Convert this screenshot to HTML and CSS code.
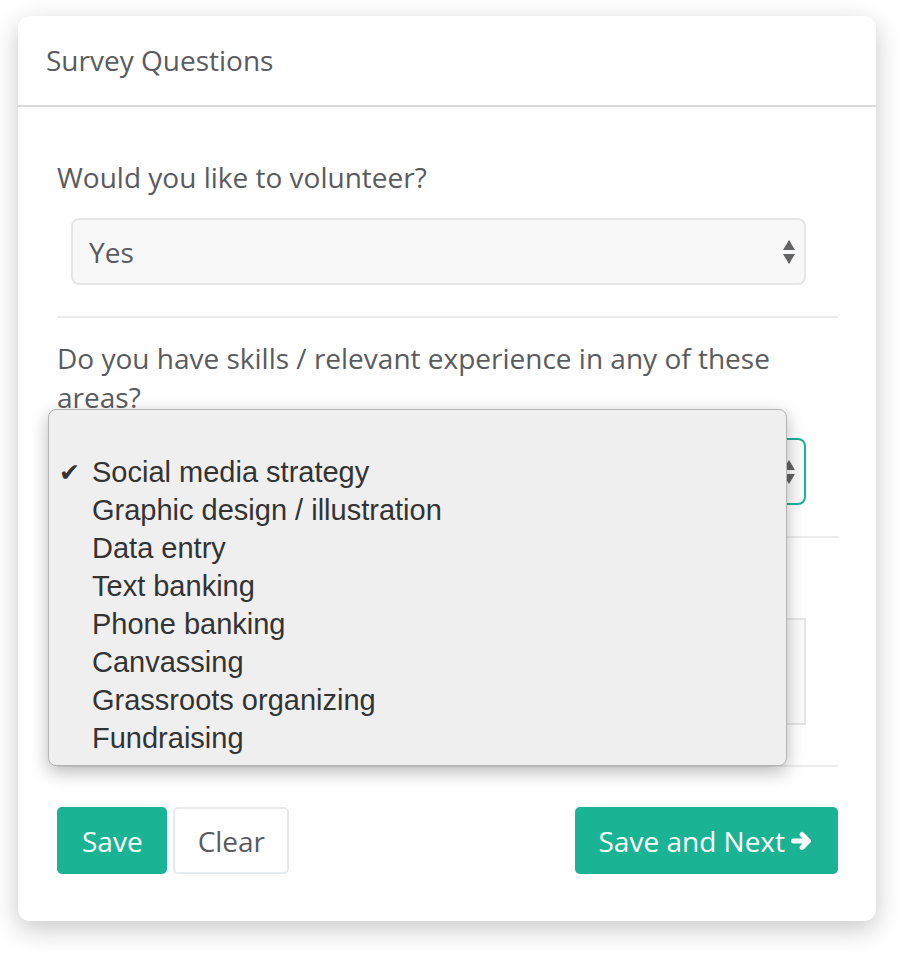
FILE: index.html
```html
<!DOCTYPE html>
<html lang="en">
<head>
    <meta charset="UTF-8">
    <meta name="viewport" content="width=device-width, initial-scale=1.0">
    <title>Survey Questions</title>
    <link rel="stylesheet" href="styles.css">
</head>
<body>
    <div class="card">
        <div class="card-header">Survey Questions</div>
        <div class="card-body">
            <div class="question">
                <label class="q-label">Would you like to volunteer?</label>
                <div class="select-box">
                    <span>Yes</span>
                    <svg class="updown" width="12" height="26" viewBox="0 0 12 26"><polygon points="6,0 12,10 0,10" fill="#626365"/><polygon points="0,14 12,14 6,24" fill="#626365"/></svg>
                </div>
            </div>
            <div class="question">
                <label class="q-label">Do you have skills / relevant experience in any of these areas?</label>
                <div class="select-box focused">
                    <span>Social media strategy</span>
                    <svg class="updown" width="12" height="26" viewBox="0 0 12 26"><polygon points="6,0 12,10 0,10" fill="#626365"/><polygon points="0,14 12,14 6,24" fill="#626365"/></svg>
                </div>
            </div>
            <div class="question">
                <label class="q-label">Anything else we should know?</label>
                <div class="text-area"></div>
            </div>
            <div class="actions">
                <button class="btn btn-primary">Save</button>
                <button class="btn btn-white">Clear</button>
                <button class="btn btn-primary btn-next">Save and Next
                    <svg width="24" height="24" viewBox="0 0 24 24"><path d="M3.5 12H18M12 5.5l6.5 6.5-6.5 6.5" fill="none" stroke="#fff" stroke-width="5" stroke-linecap="round" stroke-linejoin="round"/></svg>
                </button>
            </div>
        </div>

        <ul class="popup">
            <li class="checked">Social media strategy</li>
            <li>Graphic design / illustration</li>
            <li>Data entry</li>
            <li>Text banking</li>
            <li>Phone banking</li>
            <li>Canvassing</li>
            <li>Grassroots organizing</li>
            <li>Fundraising</li>
        </ul>
    </div>
</body>
</html>
```

FILE: styles.css
```css
body {
    margin: 0;
    padding: 16px 39px 41px 18px;
    background: #fff;
    font-family: "Open Sans", sans-serif;
    color: #595b5e;
}
.card {
    position: relative;
    width: 858px;
    height: 905px;
    background: #fff;
    border-radius: 12px;
    box-shadow: 0 8px 26px rgba(0, 0, 0, 0.22);
}
.card-header {
    height: 91px;
    display: flex;
    align-items: center;
    padding: 0 0 2px 28px;
    box-sizing: border-box;
    font-size: 28px;
    border-bottom: 2px solid #d9d9d9;
}
.card-body {
    padding: 0 38px 0 39px;
}
.question {
    padding: 21px 0 31px;
    border-bottom: 2px solid #ececec;
}
.question:first-child {
    padding-top: 51px;
}
.q-label {
    display: block;
    font-size: 28px;
    line-height: 39px;
    padding-right: 40px;
}
.select-box {
    margin: 21px 0 0 14px;
    width: 735px;
    height: 67px;
    box-sizing: border-box;
    display: flex;
    align-items: center;
    justify-content: space-between;
    padding: 0 9px 0 16px;
    background: #f8f8f8;
    border: 2px solid #e6e6e6;
    border-radius: 8px;
    font-size: 28px;
}
.select-box.focused {
    background: #fbfbfb;
    border-color: #1ab394;
}
.updown {
    margin-top: 2px;
}
.text-area {
    margin: 20px 0 9px 14px;
    width: 735px;
    height: 107px;
    box-sizing: border-box;
    background: #fbfbfb;
    border: 2px solid #e6e6e6;
}
.actions {
    display: flex;
    gap: 6px;
    padding-top: 40px;
}
.btn {
    height: 67px;
    padding: 0 22px 0 23px;
    font-family: "Open Sans", sans-serif;
    font-size: 28px;
    border-radius: 5px;
    border: 2px solid transparent;
    cursor: pointer;
}
.btn-primary {
    background: #1ab394;
    color: #fff;
}
.btn-white {
    background: #fff;
    color: #595b5e;
    border-color: #e7eaec;
}
.btn-next {
    margin-left: auto;
    display: flex;
    align-items: center;
    gap: 5px;
    padding: 0 22px;
}
.popup {
    position: absolute;
    left: 30px;
    top: 393px;
    width: 739px;
    height: 357px;
    box-sizing: border-box;
    margin: 0;
    padding: 43px 0 0;
    list-style: none;
    background: #efefef;
    border: 1px solid #b4b4b4;
    border-radius: 8px;
    box-shadow: 0 6px 18px rgba(0, 0, 0, 0.28);
    font-family: "Liberation Sans", Arial, sans-serif;
    font-size: 29px;
    color: #333;
}
.popup li {
    height: 38px;
    line-height: 38px;
    padding-left: 43px;
    position: relative;
}
.popup li.checked::before {
    content: "\2714";
    position: absolute;
    left: 10px;
    font-size: 25px;
}
```
